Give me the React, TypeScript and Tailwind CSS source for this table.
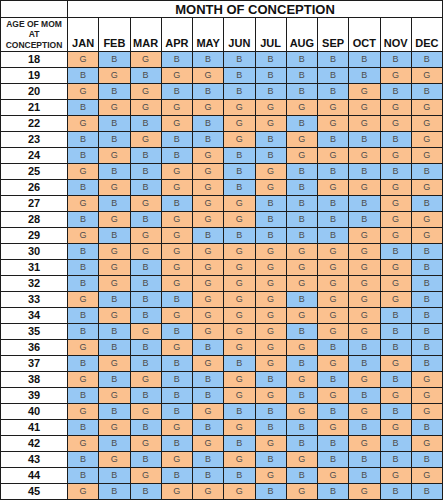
const months = ["JAN", "FEB", "MAR", "APR", "MAY", "JUN", "JUL", "AUG", "SEP", "OCT", "NOV", "DEC"];

// one string per age, 18 to 45, January first
const chart: string[] = [
  "GBGBBBBBBBBB",
  "BGBGGBBBBBGG",
  "GBGBBBBBBGBB",
  "BGGGGGGGGGGG",
  "GBBGBGGBGGGG",
  "BBGBBGBGBBBG",
  "BGBBGBBGGGGG",
  "GBBGGBGBBBBB",
  "BGBGGBGBGGGG",
  "GBGBGGBBBBGB",
  "BGBGGGBBBBGG",
  "GBGGBBBBBGGG",
  "BGGGGGGGGGBB",
  "BGBGGGGGGGGB",
  "BGBGGGGGGGGB",
  "GBBBGGGBGGGB",
  "BGBGGGGGGGBB",
  "BBGBGGGBGGBB",
  "GBBGBGGGBBBB",
  "BGBBGBGBGBGB",
  "GBGBBGBGBGBG",
  "BGBBBGGBGBGG",
  "GBGBGBBGBGBG",
  "BGBGBGBBGBGB",
  "GBGBGBGBBGBG",
  "BGBGBGBGBBBB",
  "BBGBBBGBGBGG",
  "GBBGGGBGBGBB",
];

const Cell = ({ value }: { value: string }) => (
  <div
    className={
      "flex items-center justify-center text-[9px] leading-none text-[#4d4d4d] " +
      (value === "G" ? "bg-[#fbc18f]" : "bg-[#97c8f4]")
    }
  >
    {value}
  </div>
);

export default function App() {
  return (
    <div className="w-[443px] h-[500px] bg-white font-['Liberation_Sans',Arial,sans-serif]">
      <div className="grid w-[443px] h-[500px] grid-cols-[66px_repeat(12,1fr)] grid-rows-[16px_33px_repeat(28,15px)] gap-px p-px bg-[#1c1c1c]">
        <div className="bg-white" />
        <div className="col-span-12 bg-white flex items-end justify-center pb-px text-[13px] font-bold leading-none text-[#111]">
          MONTH OF CONCEPTION
        </div>

        <div className="bg-white flex flex-col items-center justify-center text-[8.5px] font-bold leading-[10.5px] text-[#222] text-center">
          <span>AGE OF MOM</span>
          <span>AT</span>
          <span>CONCEPTION</span>
        </div>
        {months.map((m) => (
          <div key={m} className="bg-white flex items-end justify-center pb-[2px] text-[11px] font-bold leading-none text-[#111]">
            {m}
          </div>
        ))}

        {chart.map((row, i) => (
          <div key={i} className="contents">
            <div className="bg-white flex items-center justify-center text-[11px] font-bold leading-none text-[#111]">
              {18 + i}
            </div>
            {row.split("").map((v, j) => (
              <Cell key={j} value={v} />
            ))}
          </div>
        ))}
      </div>
    </div>
  );
}
